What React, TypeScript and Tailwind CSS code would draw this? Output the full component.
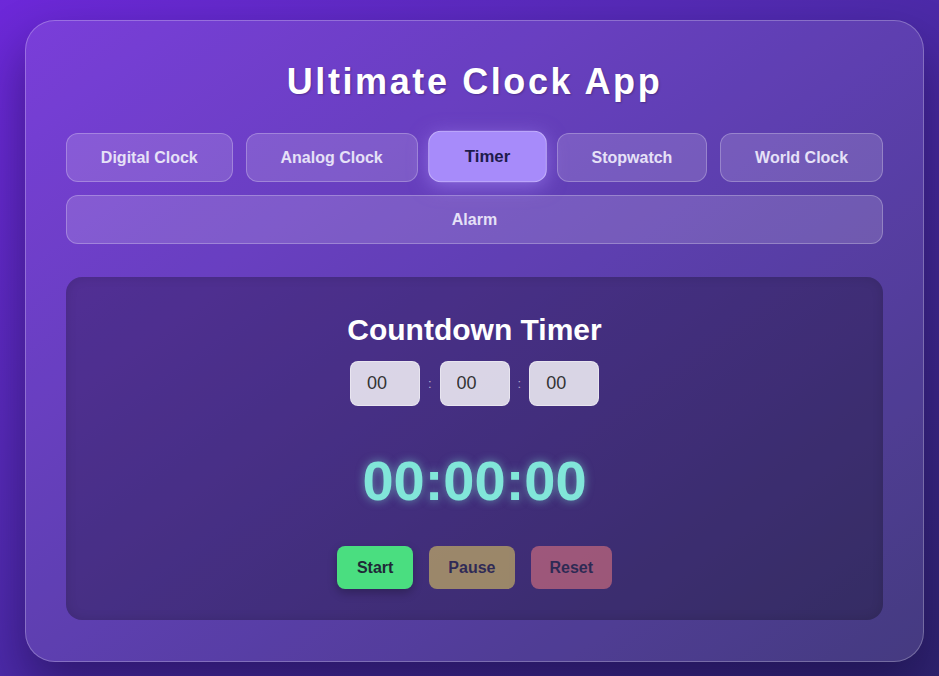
import React, { useState } from 'react';

const tabs = ['Digital Clock', 'Analog Clock', 'Timer', 'Stopwatch', 'World Clock'];

const pad = (n: number) => String(n).padStart(2, '0');

export default function App() {
  const [active, setActive] = useState('Timer');
  const [hours, setHours] = useState('00');
  const [minutes, setMinutes] = useState('00');
  const [seconds, setSeconds] = useState('00');

  const total = (parseInt(hours) || 0) * 3600 + (parseInt(minutes) || 0) * 60 + (parseInt(seconds) || 0);
  const display = `${pad(Math.floor(total / 3600))}:${pad(Math.floor((total % 3600) / 60))}:${pad(total % 60)}`;

  const tabClass = (name: string) =>
    name === active
      ? 'flex-auto rounded-[12px] border border-white/30 bg-[#a78bfa] px-[28px] py-[15px] text-[16px] leading-[17px] font-bold text-[#1e1b4b] shadow-[0_4px_18px_rgba(167,139,250,0.55)] -translate-y-px scale-[1.05]'
      : 'flex-auto rounded-[12px] border border-white/25 bg-white/15 px-[28px] py-[15px] text-[16px] leading-[17px] font-bold text-[#e6e1f7]';

  return (
    <div
      className="min-h-screen overflow-hidden bg-gradient-to-br from-[#6d28d9] via-[#4c2aa8] to-[#2f2470] pt-[20px] pl-[25px]"
      style={{ fontFamily: '"Liberation Sans", Arial, sans-serif' }}
    >
      <div className="w-[899px] rounded-[30px] border border-white/25 bg-white/10 px-[40px] pt-[40px] pb-[41px] shadow-[0_25px_50px_rgba(15,5,50,0.45)]">
        <h1 className="text-center text-[36px] leading-[41px] font-bold tracking-[2.6px] text-white [text-shadow:1px_1px_2px_rgba(0,0,0,0.25)]">
          Ultimate Clock App
        </h1>

        {/* Tabs */}
        <div className="mt-[31px] flex flex-wrap gap-[13px]">
          {tabs.map(t => (
            <button key={t} type="button" onClick={() => setActive(t)} className={tabClass(t)}>
              {t}
            </button>
          ))}
          <button type="button" onClick={() => setActive('Alarm')} className={tabClass('Alarm') + ' basis-full'}>
            Alarm
          </button>
        </div>

        {/* Timer panel */}
        <div className="mt-[33px] flex flex-col items-center rounded-[16px] bg-black/25 pt-[35px] pb-[31px] shadow-[inset_0_0_12px_rgba(0,0,0,0.12)]">
          <h2 className="text-[30px] leading-[35px] font-bold text-white">Countdown Timer</h2>

          <div className="mt-[14px] flex items-center">
            <input
              value={hours}
              onChange={e => setHours(e.target.value)}
              className="h-[45px] w-[70px] rounded-[8px] border border-white/40 bg-white/80 pl-[16px] text-[18px] text-[#333] outline-none"
            />
            <span className="mx-[8px] text-[13px] text-white/60">:</span>
            <input
              value={minutes}
              onChange={e => setMinutes(e.target.value)}
              className="h-[45px] w-[70px] rounded-[8px] border border-white/40 bg-white/80 pl-[16px] text-[18px] text-[#333] outline-none"
            />
            <span className="mx-[8px] text-[13px] text-white/60">:</span>
            <input
              value={seconds}
              onChange={e => setSeconds(e.target.value)}
              className="h-[45px] w-[70px] rounded-[8px] border border-white/40 bg-white/80 pl-[16px] text-[18px] text-[#333] outline-none"
            />
          </div>

          <div className="mt-[43px] text-[56px] leading-[64px] font-bold text-[#81e6d9] [text-shadow:0_0_10px_rgba(129,230,217,0.55)]">
            {display}
          </div>

          <div className="mt-[33px] flex gap-[16px]">
            <button type="button" className="rounded-[8px] bg-[#4ade80] px-[20px] py-[12px] text-[16px] leading-[19px] font-bold text-[#1f2937] shadow-[0_4px_10px_rgba(0,0,0,0.25)]">
              Start
            </button>
            <button type="button" disabled className="rounded-[8px] bg-[#f6e05e] px-[19px] py-[12px] text-[16px] leading-[19px] font-bold text-[#1f2937] opacity-50">
              Pause
            </button>
            <button type="button" disabled className="rounded-[8px] bg-[#fc8181] px-[19px] py-[12px] text-[16px] leading-[19px] font-bold text-[#1f2937] opacity-50">
              Reset
            </button>
          </div>
        </div>
      </div>
    </div>
  );
}
